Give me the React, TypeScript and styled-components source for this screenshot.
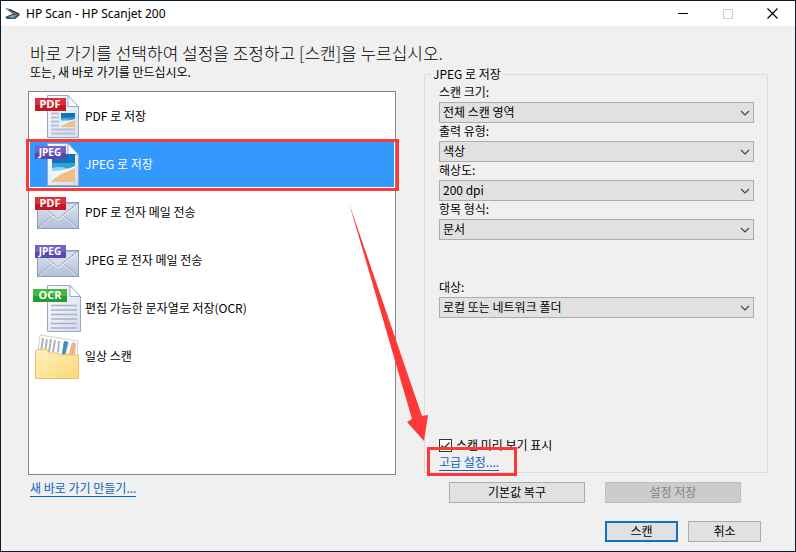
import React, { useState } from "react";
import styled, { createGlobalStyle, css } from "styled-components";

const RED = "#fd3838";

const GlobalStyle = createGlobalStyle`
  * { box-sizing: border-box; }
  body {
    margin: 0;
    background: #f0f0f0;
    color: #000;
    font-family: "Noto Sans CJK KR", "Noto Sans", sans-serif;
    font-size: 12px;
    line-height: 16px;
  }
  button, select, input { font: inherit; color: inherit; }
`;

const Window = styled.div`
  min-height: 100vh;
  display: flex;
  flex-direction: column;
  border: 1px solid #0b1c30;
  background: #f0f0f0;
  overflow: hidden;
`;

const TitleBar = styled.header`
  display: flex;
  align-items: center;
  height: 25px;
  padding-left: 4px;
  background: #fff;
`;

const Title = styled.div`
  flex: 1;
  padding-left: 5px;
  font-family: "Noto Sans", "Noto Sans CJK KR", sans-serif;
  font-size: 12px;
`;

const CaptionButton = styled.button`
  width: 45px;
  height: 25px;
  padding: 0;
  border: 0;
  background: none;
  display: flex;
  align-items: center;
  justify-content: center;
`;

const Content = styled.main`
  flex: 1;
  display: flex;
  flex-direction: column;
  padding: 15px 27px 9px;
`;

const Heading = styled.h1`
  margin: 0;
  padding-left: 2px;
  font-size: 17px;
  font-weight: 300;
  line-height: 23px;
  white-space: nowrap;
`;

const Columns = styled.div`
  flex: 1;
  display: grid;
  grid-template-columns: 368fr 344fr;
  gap: 28px;
`;

const Column = styled.div`
  display: flex;
  flex-direction: column;
`;

const Shortcuts = styled(Column)`
  padding-bottom: 7px;
`;

const SubHeading = styled.p`
  margin: 0 0 12px;
  padding-left: 2px;
  line-height: 15px;
`;

const ShortcutList = styled.div`
  flex: 1;
  border: 1px solid #828790;
  background: #fff;
`;

const ShortcutRow = styled.button<{ $selected: boolean }>`
  position: relative;
  display: flex;
  align-items: center;
  gap: 4px;
  width: 100%;
  height: 48px;
  padding: 0 4px;
  border: 0;
  background: none;
  text-align: left;
  ${(p) =>
    p.$selected &&
    css`
      color: #fff;
      background: #3399ff;
      box-shadow: inset 0 0 0 1px #fff;
    `}
`;

const RowMarker = styled.span`
  position: absolute;
  inset: -1px -4px -3px -3px;
  border: 3px solid ${RED};
`;

const Link = styled.a`
  color: #0a64bd;
  text-decoration: none;
  border-bottom: 1px solid #0a64bd;
  line-height: 15px;
`;

const NewShortcut = styled.div`
  margin-top: 5px;
  padding-left: 2px;
`;

const Settings = styled.fieldset`
  flex: 1;
  display: flex;
  flex-direction: column;
  min-width: 0;
  margin: 3px 0 9px;
  padding: 0 6px;
  border: 1px solid #dcdcdc;
`;

const Legend = styled.legend`
  padding: 0 2px;
  line-height: 14px;
`;

const SettingsBody = styled.div`
  flex: 1;
  display: flex;
  flex-direction: column;
  padding: 3px 7px 1px 8px;
`;

const Field = styled.div<{ $spaced?: boolean }>`
  display: flex;
  flex-direction: column;
  margin-top: ${(p) => (p.$spaced ? "39px" : "0")};
`;

const FieldLabel = styled.label`
  line-height: 16px;
  padding-bottom: 2px;
`;

const SelectBox = styled.div`
  position: relative;
  display: flex;
`;

const Select = styled.select`
  flex: 1;
  height: 21px;
  padding: 0 24px 2px 3px;
  appearance: none;
  border: 1px solid #adadad;
  border-radius: 0;
  background: #e1e1e1;
`;

const Chevron = styled.svg`
  position: absolute;
  right: 4px;
  top: 8px;
  pointer-events: none;
`;

const Options = styled.div`
  margin-top: auto;
`;

const CheckLabel = styled.label`
  display: flex;
  align-items: center;
  gap: 4px;
  height: 18px;
`;

const CheckBox = styled.span`
  position: relative;
  display: flex;
`;

const CheckInput = styled.input`
  appearance: none;
  width: 13px;
  height: 13px;
  margin: 0;
  border: 1px solid #333;
  background: #fff;
  &:checked + svg { visibility: visible; }
`;

const Tick = styled.svg`
  position: absolute;
  inset: 0;
  visibility: hidden;
  pointer-events: none;
`;

const Advanced = styled.div`
  position: relative;
  height: 17px;
`;

const AdvancedMarker = styled.span`
  position: absolute;
  left: -12px;
  top: -7px;
  width: 90px;
  height: 29px;
  border: 3px solid ${RED};
  pointer-events: none;
`;

const Arrow = styled.svg`
  position: absolute;
  left: -91px;
  bottom: 30px;
  pointer-events: none;
`;

const ButtonRow = styled.div`
  display: flex;
  gap: 20px;
  padding: 0 27px 0 25px;
`;

const Footer = styled.footer`
  display: flex;
  justify-content: flex-end;
  gap: 10px;
  margin-top: 18px;
  padding-right: 7px;
`;

const Button = styled.button<{ $primary?: boolean; $wide?: boolean }>`
  ${(p) => (p.$wide ? "flex: 1;" : "width: 73px;")}
  height: 21px;
  padding: 0 0 2px;
  line-height: 15px;
  border: ${(p) => (p.$primary ? "2px solid #0f72c6" : "1px solid #adadad")};
  background: #e1e1e1;
  &:disabled {
    color: #838383;
    border-color: #bfbfbf;
    background: #cccccc;
  }
`;

type IconKind = "pdf" | "jpeg" | "pdfMail" | "jpegMail" | "ocr" | "folder";

const BADGES = {
  PDF: ["#dc3238", "#c01a24"],
  JPEG: ["#7562c6", "#5c47ad"],
  OCR: ["#45b843", "#259c2e"],
};

function Badge({ kind, y }: { kind: keyof typeof BADGES; y: number }) {
  const [top, bottom] = BADGES[kind];
  const wide = kind === "OCR";
  return (
    <g>
      <rect x={wide ? 0 : 2} y={y} width={wide ? 34 : 31} height="13" fill={bottom} />
      <rect x={wide ? 0 : 2} y={y} width={wide ? 34 : 31} height="7" fill={top} />
      <text
        x="17"
        y={y + 10}
        textAnchor="middle"
        fontFamily="Open Sans, Noto Sans, sans-serif"
        fontWeight="700"
        fontSize={kind === "JPEG" ? 10 : 11}
        fill="#fff"
      >
        {kind}
      </text>
    </g>
  );
}

function Beach({ x, y, w, h }: { x: number; y: number; w: number; h: number }) {
  return (
    <svg x={x} y={y} width={w} height={h} viewBox="0 0 24 28" preserveAspectRatio="none">
      <rect width="24" height="28" fill="#6cc0e4" />
      <rect width="24" height="11" fill="#1272b8" />
      <path d="M0 9H24V15L12 18H0Z" fill="#2fa3d6" />
      <path d="M0 14Q8 12 14 14T24 13V18H0Z" fill="#8fd3ea" />
      <path d="M0 17Q13 17 24 12V17L10 28H0Z" fill="#eef6f6" />
      <path d="M0 26L10 20L24 14V28H0Z" fill="#efbf88" />
    </svg>
  );
}

function Page({ wide = false }: { wide?: boolean }) {
  const r = wide ? 48 : 46;
  const t = wide ? 1 : 3;
  const b = wide ? 48 : 46;
  return (
    <g stroke="#9ba8c5" strokeWidth="1">
      <path d={`M14.5 ${t + 0.5}H${r - 11}L${r - 0.5} ${t + 12}V${b - 0.5}H14.5Z`} fill="url(#paper)" />
      <path d={`M${r - 11} ${t + 0.5}V${t + 11.5}H${r - 0.5}Z`} fill="#fdfeff" />
    </g>
  );
}

function Envelope() {
  return (
    <g>
      <rect x="4.5" y="14.5" width="41" height="26" fill="url(#mail)" stroke="#8c9cba" />
      <path d="M5 40L20 27M45 40L30 27" stroke="#8e9dbc" fill="none" />
      <path d="M6 40L21 27M44 40L29 27" stroke="#fff" strokeOpacity=".6" fill="none" />
      <path d="M5 15L25 31L45 15Z" fill="#d5deeb" stroke="#8898b8" />
      <path d="M6 17L25 32L44 17" stroke="#f7f9fc" fill="none" />
    </g>
  );
}

function ShortcutIcon({ kind }: { kind: IconKind }) {
  return (
    <svg width="48" height="48" viewBox="0 0 48 48" aria-hidden="true">
      <defs>
        <linearGradient id="paper" x1="0" y1="0" x2="1" y2="1">
          <stop offset="0" stopColor="#fafcff" />
          <stop offset="1" stopColor="#d5ddec" />
        </linearGradient>
        <linearGradient id="mail" x1="0" y1="0" x2="0" y2="1">
          <stop offset="0" stopColor="#dce3ee" />
          <stop offset="1" stopColor="#b2c0d7" />
        </linearGradient>
        <linearGradient id="manila" x1="0" y1="0" x2="1" y2="1">
          <stop offset="0" stopColor="#fff1bd" />
          <stop offset="1" stopColor="#fbd877" />
        </linearGradient>
      </defs>
      {kind === "pdf" && (
        <>
          <Page />
          <path d="M18 21.5H26M18 25.5H26M18 29.5H26M18 33.5H26M18 37.5H42M18 41.5H42" stroke="#b5bfd3" strokeWidth="2" />
          <Beach x={28} y={21} w={14} h={14} />
          <Badge kind="PDF" y={6} />
        </>
      )}
      {kind === "jpeg" && (
        <>
          <Page />
          <Beach x={19} y={14} w={23} h={28} />
          <Badge kind="JPEG" y={6} />
        </>
      )}
      {kind === "pdfMail" && (
        <>
          <Envelope />
          <Badge kind="PDF" y={9} />
        </>
      )}
      {kind === "jpegMail" && (
        <>
          <Envelope />
          <Badge kind="JPEG" y={9} />
        </>
      )}
      {kind === "ocr" && (
        <>
          <Page wide />
          <path d="M18 21.5H44M18 26H44M18 30.500H44M18 35H44M18 39.500H44M18 44H44" stroke="#a9b1c4" strokeWidth="1.500" />
          <Badge kind="OCR" y={5} />
        </>
      )}
      {kind === "folder" && (
        <>
          <path d="M7 3L45 9L44 28H4Z" fill="#fff" stroke="#ccd0d5" />
          <path d="M10 6L8 20M14 7L12 20M18 7L16 20M22 8L20 20M26 9L25 20" stroke="#aeb4ba" strokeWidth="2" />
          <path d="M31 9L43 11L42 24H29Z" fill="#e9b489" />
          <path d="M31 9L35 10L32 22H29Z" fill="#2c91ca" />
          <path d="M36 10L39 10L36 22H33Z" fill="#f3f8fa" />
          <path d="M2.5 46.5V20L4 17.500H14L16 21H26L28 23H45.500V46.500Z" fill="url(#manila)" stroke="#e6c36c" />
        </>
      )}
    </svg>
  );
}

const SHORTCUTS: { icon: IconKind; label: string }[] = [
  { icon: "pdf", label: "PDF 로 저장" },
  { icon: "jpeg", label: "JPEG 로 저장" },
  { icon: "pdfMail", label: "PDF 로 전자 메일 전송" },
  { icon: "jpegMail", label: "JPEG 로 전자 메일 전송" },
  { icon: "ocr", label: "편집 가능한 문자열로 저장(OCR)" },
  { icon: "folder", label: "일상 스캔" },
];

const FIELDS = [
  { id: "size", label: "스캔 크기:", value: "전체 스캔 영역" },
  { id: "output", label: "출력 유형:", value: "색상" },
  { id: "resolution", label: "해상도:", value: "200 dpi" },
  { id: "item", label: "항목 형식:", value: "문서" },
  { id: "target", label: "대상:", value: "로컬 또는 네트워크 폴더", spaced: true },
];

export default function App() {
  const [selected, setSelected] = useState(1);
  return (
    <Window>
      <GlobalStyle />
      <TitleBar>
        <svg width="16" height="16" viewBox="0 0 16 16" aria-hidden="true">
          <path d="M0 2L5 3L15 8L14 10L9 9Z" fill="#6b7176" />
          <path d="M5 3L15 8L12 8L4 4Z" fill="#34393d" />
          <path d="M0 11L7 8L15 9L10 13L2 13Z" fill="#454c52" />
          <path d="M3 11L8 9L12 9L8 12Z" fill="#65a9d0" />
        </svg>
        <Title>HP Scan - HP Scanjet 200</Title>
        <CaptionButton aria-label="최소화">
          <svg width="10" height="11"><path d="M0 5.500H10" stroke="#000" /></svg>
        </CaptionButton>
        <CaptionButton aria-label="최대화" disabled>
          <svg width="10" height="10"><rect x=".5" y=".5" width="9" height="9" fill="none" stroke="#ccc" /></svg>
        </CaptionButton>
        <CaptionButton aria-label="닫기">
          <svg width="11" height="11"><path d="M.5 .5L10.500 10.500M10.500 .5L.5 10.500" stroke="#000" strokeWidth="1.200" /></svg>
        </CaptionButton>
      </TitleBar>
      <Content>
        <Heading>바로 가기를 선택하여 설정을 조정하고 [스캔]을 누르십시오.</Heading>
        <Columns>
          <Shortcuts>
            <SubHeading>또는, 새 바로 가기를 만드십시오.</SubHeading>
            <ShortcutList>
              {SHORTCUTS.map((s, i) => (
                <ShortcutRow
                  key={s.icon}
                  $selected={i === selected}
                  aria-pressed={i === selected}
                  onClick={() => setSelected(i)}
                >
                  <ShortcutIcon kind={s.icon} />
                  {s.label}
                  {i === 1 && <RowMarker />}
                </ShortcutRow>
              ))}
            </ShortcutList>
            <NewShortcut>
              <Link href="#new">새 바로 가기 만들기...</Link>
            </NewShortcut>
          </Shortcuts>
          <Column>
            <Settings>
              <Legend>JPEG 로 저장</Legend>
              <SettingsBody>
                {FIELDS.map((f) => (
                  <Field key={f.id} $spaced={f.spaced}>
                    <FieldLabel htmlFor={f.id}>{f.label}</FieldLabel>
                    <SelectBox>
                      <Select id={f.id}>
                        <option>{f.value}</option>
                      </Select>
                      <Chevron width="10" height="6" viewBox="0 0 10 6">
                        <path d="M1 1L5 5L9 1" fill="none" stroke="#444" strokeWidth="1.200" />
                      </Chevron>
                    </SelectBox>
                  </Field>
                ))}
                <Options>
                  <CheckLabel>
                    <CheckBox>
                      <CheckInput type="checkbox" defaultChecked />
                      <Tick width="13" height="13" viewBox="0 0 13 13">
                        <path d="M2.500 6.500L5 9L10.500 3.500" fill="none" stroke="#222" strokeWidth="1.200" />
                      </Tick>
                    </CheckBox>
                    스캔 미리 보기 표시
                  </CheckLabel>
                  <Advanced>
                    <Link href="#advanced">고급 설정....</Link>
                    <AdvancedMarker />
                    <Arrow width="80" height="238" viewBox="0 0 80 238" aria-hidden="true">
                      <path d="M1 0L74 213L80 212L76 238L59 219L64 216Z" fill={RED} />
                    </Arrow>
                  </Advanced>
                </Options>
              </SettingsBody>
            </Settings>
            <ButtonRow>
              <Button $wide>기본값 복구</Button>
              <Button $wide disabled>설정 저장</Button>
            </ButtonRow>
          </Column>
        </Columns>
        <Footer>
          <Button $primary>스캔</Button>
          <Button>취소</Button>
        </Footer>
      </Content>
    </Window>
  );
}
